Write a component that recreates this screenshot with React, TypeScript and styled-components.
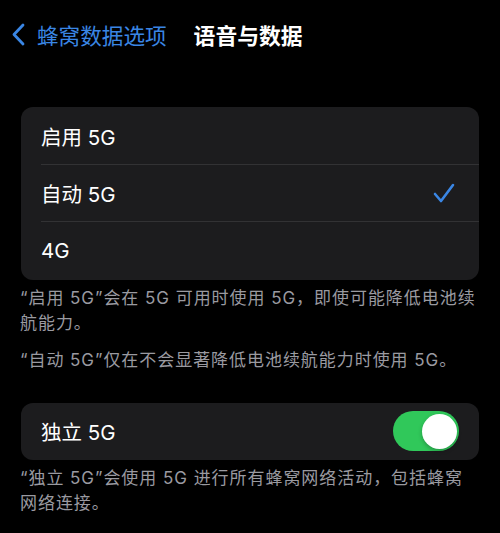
import styled, { createGlobalStyle } from "styled-components";

const GlobalStyle = createGlobalStyle`
  html, body {
    margin: 0;
    padding: 0;
    background: #000;
  }
  body {
    font-family: Inter, "Noto Sans CJK SC", sans-serif;
    -webkit-font-smoothing: antialiased;
  }
`;

const Screen = styled.div`
  width: 500px;
  height: 533px;
  background: #000;
  color: #fff;
  overflow: hidden;
`;

const NavBar = styled.div`
  display: flex;
  align-items: center;
  height: 68px;
  padding-left: 12px;
  gap: 27px;
`;

const BackButton = styled.div`
  display: flex;
  align-items: center;
  gap: 12px;
  color: #3a86e4;
  font-size: 21.6px;
`;

const Title = styled.div`
  font-size: 21.8px;
  font-weight: 700;
  color: #fff;
`;

const Section = styled.div<{ $top: number }>`
  margin-top: ${({ $top }) => $top}px;
  padding: 0 21px;
`;

const Card = styled.div`
  background: #1c1c1e;
  border-radius: 12px;
  overflow: hidden;
`;

const Row = styled.div<{ $divider?: boolean }>`
  position: relative;
  display: flex;
  align-items: center;
  justify-content: space-between;
  height: 57.5px;
  padding: 0 20px 0 20px;
  font-size: 20.5px;

  ${({ $divider }) =>
    $divider &&
    `
    &::after {
      content: "";
      position: absolute;
      left: 20px;
      right: 0;
      bottom: 0;
      height: 1px;
      background: #323234;
    }
  `}
`;

const Footer = styled.div`
  padding: 6px 20px 0 20px;
  color: #9a9aa0;
  font-size: 17px;
  line-height: 25px;
  letter-spacing: 0.95px;
  white-space: nowrap;
`;

const Para = styled.p`
  margin: 0 0 12px 0;
`;

const Toggle = styled.div<{ $on: boolean }>`
  width: 66px;
  height: 40px;
  border-radius: 20px;
  background: ${({ $on }) => ($on ? "#30c85a" : "#39393d")};
  display: flex;
  align-items: center;
  justify-content: ${({ $on }) => ($on ? "flex-end" : "flex-start")};
  padding: 0 2.5px;
  box-sizing: border-box;
`;

const Knob = styled.div`
  width: 35px;
  height: 35px;
  border-radius: 50%;
  background: #fff;
  box-shadow: 0 2px 4px rgba(0, 0, 0, 0.25);
`;

const Check = () => (
  <svg width="22" height="20" viewBox="0 0 22 20" style={{ marginRight: 4 }}>
    <polyline
      points="2,11 8,18 20,2"
      fill="none"
      stroke="#3a86e4"
      strokeWidth="2.6"
      strokeLinecap="round"
      strokeLinejoin="round"
    />
  </svg>
);

const Chevron = () => (
  <svg width="13" height="23" viewBox="0 0 13 23">
    <polyline
      points="11,2 2,11.5 11,21"
      fill="none"
      stroke="#3a86e4"
      strokeWidth="2.8"
      strokeLinecap="round"
      strokeLinejoin="round"
    />
  </svg>
);

const options = ["启用 5G", "自动 5G", "4G"];

export default function App() {
  const selected = 1;
  return (
    <Screen>
      <GlobalStyle />
      <NavBar>
        <BackButton>
          <Chevron />
          蜂窝数据选项
        </BackButton>
        <Title>语音与数据</Title>
      </NavBar>

      <Section $top={39}>
        <Card>
          {options.map((label, i) => (
            <Row key={label} $divider={i < options.length - 1}>
              <span>{label}</span>
              {i === selected && <Check />}
            </Row>
          ))}
        </Card>
      </Section>
      <Footer>
        <Para>
          “启用 5G”会在 5G 可用时使用 5G，即使可能降低电池续
          <br />
          航能力。
        </Para>
        <Para>“自动 5G”仅在不会显著降低电池续航能力时使用 5G。</Para>
      </Footer>

      <Section $top={30}>
        <Card>
          <Row>
            <span>独立 5G</span>
            <Toggle $on>
              <Knob />
            </Toggle>
          </Row>
        </Card>
      </Section>
      <Footer>
        <Para>
          “独立 5G”会使用 5G 进行所有蜂窝网络活动，包括蜂窝
          <br />
          网络连接。
        </Para>
      </Footer>
    </Screen>
  );
}
